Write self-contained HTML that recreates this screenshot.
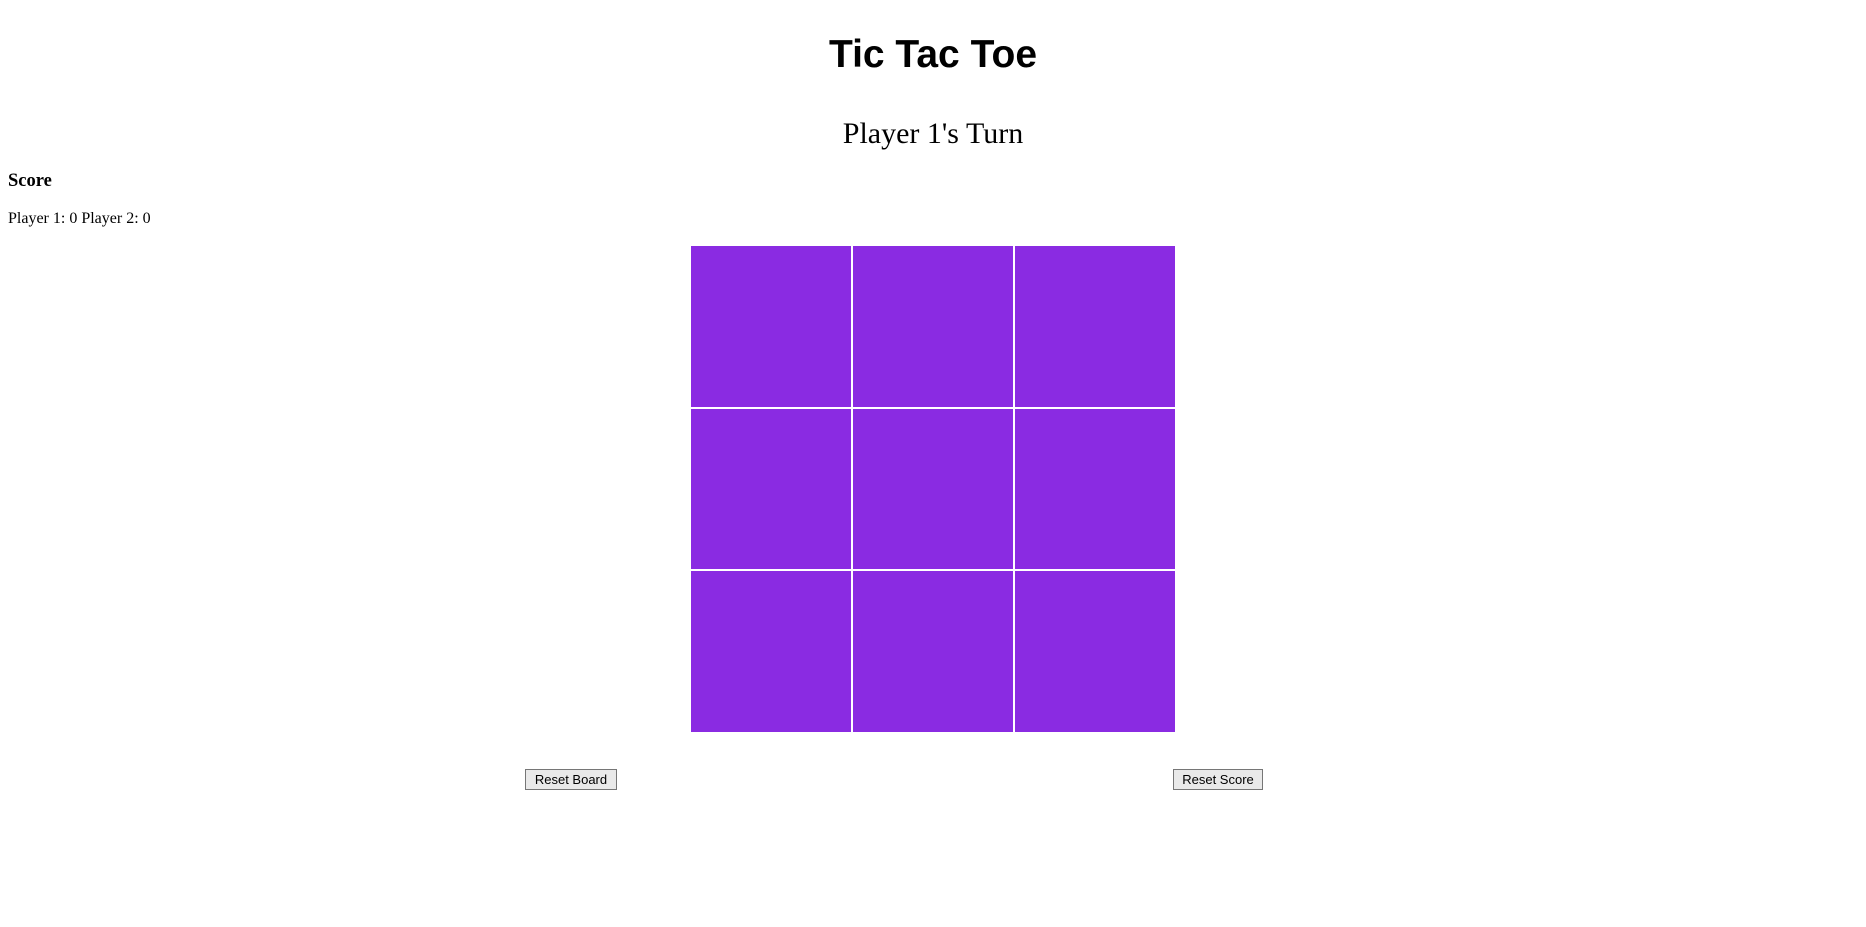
<!DOCTYPE html>
<html><head><meta charset="utf-8"><style>
html,body{margin:0;padding:0;background:#fff;width:1866px;height:927px;overflow:hidden;position:relative}
.t{position:absolute;white-space:nowrap;line-height:1}
h1{position:absolute;margin:0;left:0;width:1866px;text-align:center;top:35px;font:bold 39px "Liberation Sans",sans-serif;line-height:1}
.turn{left:0;width:1866px;text-align:center;top:117px;font:30px "Liberation Serif",serif}
.score{left:8px;top:171px;font:bold 18.5px "Liberation Serif",serif}
.pl{left:8px;top:210px;font:16px "Liberation Serif",serif}
.board{position:absolute;left:691px;top:246px;width:484px;height:486px;display:grid;grid-template-columns:repeat(3,1fr);grid-template-rows:repeat(3,1fr);gap:2px;background:#fff}
.board div{background:#8a2be2}
button{position:absolute;top:769px;height:21px;font:13px "Liberation Sans",sans-serif;background:#e9e9e9;border:1px solid #767676;padding:0 7px;color:#000}
</style></head><body>
<h1>Tic Tac Toe</h1>
<div class="t turn">Player 1's Turn</div>
<div class="t score">Score</div>
<div class="t pl">Player 1: 0 Player 2: 0</div>
<div class="board"><div></div><div></div><div></div><div></div><div></div><div></div><div></div><div></div><div></div></div>
<button style="left:525px;width:92px">Reset Board</button>
<button style="left:1173px;width:90px">Reset Score</button>
</body></html>
